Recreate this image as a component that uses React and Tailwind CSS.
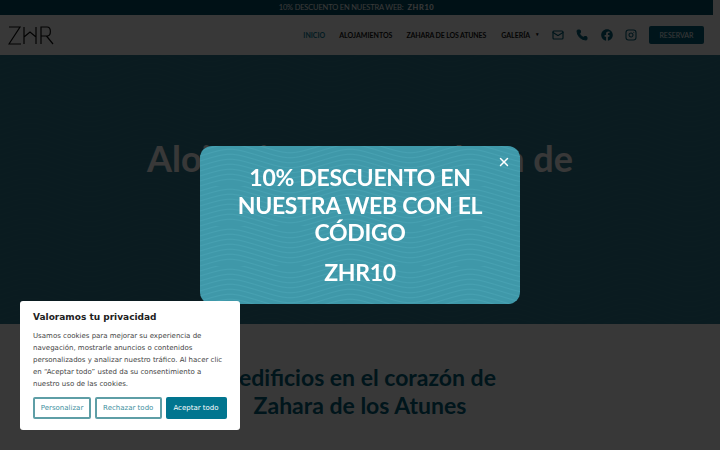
import React from 'react'
import { Mail, Phone, Instagram, X } from 'lucide-react'
import { FaFacebook } from 'react-icons/fa'

const lato = { fontFamily: 'Lato, sans-serif' }

function Waves({ id, color }) {
  return (
    <svg className="absolute inset-0 w-full h-full" aria-hidden="true">
      <defs>
        <pattern id={id} width="120" height="40" patternUnits="userSpaceOnUse">
          {[0, 5, 10, 15, 20, 25, 30, 35, 40].map(y => (
            <path key={y} d={`M0 ${y} C30 ${y - 9} 30 ${y - 9} 60 ${y} S90 ${y + 9} 120 ${y}`} fill="none" stroke={color} strokeWidth="1" />
          ))}
        </pattern>
      </defs>
      <rect width="100%" height="100%" fill={`url(#${id})`} />
    </svg>
  )
}

function Logo() {
  return (
    <svg width="46" height="19" viewBox="0 0 46 19" fill="none" stroke="#0d0d0d" strokeWidth="1.2" role="img" aria-label="ZHR">
      <path d="M1 1H12L1 18H13" />
      <path d="M16 1V18M28 1V18M16 11L22 6L28 11" />
      <path d="M33 18V1H39C43.5 1 43.5 10 39 10H33M38.5 10L45 18" />
    </svg>
  )
}

export default function App() {
  return (
    <div className="relative w-[720px] h-[450px] overflow-hidden bg-white" style={lato}>
      <div className="w-[713px] h-[15px] bg-[#014d63] flex items-center justify-center text-[7.5px] text-white tracking-[-0.17px]">
        10% DESCUENTO EN NUESTRA WEB: <b className="ml-1 tracking-[0.6px]">ZHR10</b>
      </div>
      <header className="h-[40px] flex items-center justify-between pl-2 pr-[16px] bg-white">
        <Logo />
        <nav className="flex items-center text-[7px] font-bold text-[#111]">
          <a className="text-[#0e7f9a] mr-[14px]">INICIO</a>
          <a className="mr-[14px]">ALOJAMIENTOS</a>
          <a className="mr-[15px] tracking-[-0.15px]">ZAHARA DE LOS ATUNES</a>
          <a>GALERÍA</a>
          <span className="ml-[6px] mr-[13px] text-[5px]">▾</span>
          <div className="flex items-center gap-[12.3px] text-[#01607a]">
            <Mail size={12} strokeWidth={2.4} />
            <Phone size={12} strokeWidth={2} fill="currentColor" />
            <FaFacebook size={12} />
            <Instagram size={12} strokeWidth={2.2} />
          </div>
          <a className="ml-[12px] w-[55px] h-[18px] flex items-center justify-center bg-[#01607a] text-white font-normal rounded-[2px]">RESERVAR</a>
        </nav>
      </header>
      <section className="relative h-[269px] bg-[#2f7c92] overflow-hidden flex justify-center pt-[82px]">
        <Waves id="hero" color="#337f95" />
        <h1 className="relative text-[36px] leading-[42px] font-bold text-white text-center">Alojamientos en Zahara de</h1>
      </section>
      <section className="pt-[40px] text-center text-[#01607a] text-[23px] leading-[27.5px] font-bold">
        <h2><span className="mr-[-4px]">2 </span>edificios en el corazón de<br />Zahara de los Atunes</h2>
      </section>

      <div className="fixed inset-0 bg-black/[0.78] flex items-center justify-center">
        <div className="relative w-[320px] h-[158px] rounded-[12px] bg-[#3f98a9] overflow-hidden text-white text-center">
          <Waves id="modal" color="#47a1b2" />
          <button className="absolute right-[9px] top-[9px] text-white"><X size={14} strokeWidth={2.5} /></button>
          <div className="relative pt-[18px]">
            <p className="text-[23px] leading-[27.5px] font-bold tracking-[-0.3px] px-6">10% DESCUENTO EN NUESTRA WEB CON EL CÓDIGO</p>
            <p className="text-[23px] leading-[28px] font-bold tracking-[-0.3px] mt-[11px]">ZHR10</p>
          </div>
        </div>
      </div>

      <div className="fixed left-5 bottom-5 w-[220px] h-[129px] bg-white rounded-[3px] px-[13px] pt-[9px]" style={{ fontFamily: '"DejaVu Sans", sans-serif' }}>
        <p className="text-[9px] leading-[14px] font-bold text-[#212121]">Valoramos tu privacidad</p>
        <p className="mt-[6px] text-[7px] leading-[12px] text-[#444]">Usamos cookies para mejorar su experiencia de navegación, mostrarle anuncios o contenidos personalizados y analizar nuestro tráfico. Al hacer clic en “Aceptar todo” usted da su consentimiento a nuestro uso de las cookies.</p>
        <div className="mt-[7px] flex gap-1 text-[7px]">
          <button className="w-[58px] h-[22px] border-2 border-[#5e9ea6] text-[#3e8fa0] rounded-[2px]">Personalizar</button>
          <button className="w-[66.5px] h-[22px] border-2 border-[#5e9ea6] text-[#3e8fa0] rounded-[2px]">Rechazar todo</button>
          <button className="w-[61px] h-[22px] bg-[#01758f] text-white rounded-[2px]">Aceptar todo</button>
        </div>
      </div>
    </div>
  )
}
